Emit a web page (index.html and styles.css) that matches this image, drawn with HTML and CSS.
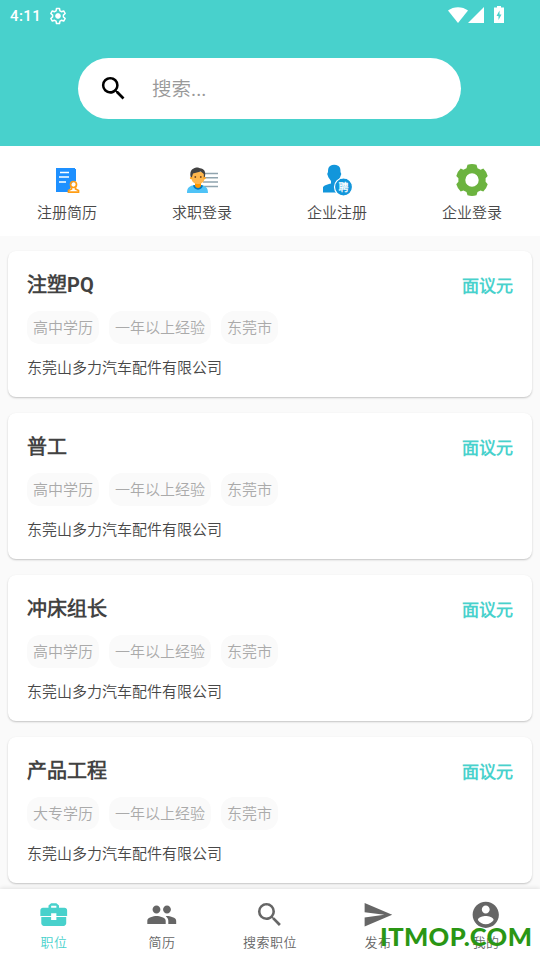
FILE: index.html
```html
<!DOCTYPE html>
<html lang="zh-CN">
<head>
<meta charset="utf-8">
<title>职位</title>
<link rel="stylesheet" href="styles.css">
</head>
<body>
<header class="top">
  <div class="status">
    <span class="time">4:11</span>
    <svg class="gear" width="18" height="18" viewBox="0 0 24 24" fill="none" stroke="#fff"><path stroke-width="2" stroke-linejoin="round" d="M10 2h4l.6 3.1 2 1.2 3-1 2 3.400-2.400 2.100v2.400l2.400 2.100-2 3.400-3-1-2 1.200L14 22h-4l-.6-3.100-2-1.200-3 1-2-3.400 2.400-2.100v-2.400L2.400 8.700l2-3.400 3 1 2-1.200z"/><circle cx="12" cy="12" r="3.300" fill="#fff"/></svg>
    <div class="signals">
      <svg width="20" height="16" viewBox="0 0 20 16"><path fill="#fff" d="M0 3.500C5.500-1 14.500-1 20 3.500L10 16z"/></svg>
      <svg width="16" height="16" viewBox="0 0 16 16"><path fill="#fff" d="M16 0v16H0z"/></svg>
      <svg class="battery" width="10" height="17" viewBox="0 0 10 17"><path fill="#fff" d="M3 0h4v1.500h3V17H0V1.500h3z"/><path fill="#48d1cc" d="M5.500 4.500 2.500 10H4.500v4l3-5.500h-2z"/></svg>
    </div>
  </div>
  <div class="search">
    <svg width="31" height="31" viewBox="0 0 24 24"><path d="M15.500 14h-.79l-.28-.27A6.470 6.470 0 0 0 16 9.500 6.500 6.500 0 1 0 9.500 16c1.610 0 3.090-.59 4.230-1.570l.27.28v.79l5 4.990L20.490 19l-4.990-5zm-6 0C7.010 14 5 11.990 5 9.500S7.010 5 9.500 5 14 7.010 14 9.500 11.990 14 9.500 14z"/></svg>
    <span>搜索...</span>
  </div>
</header>
<nav class="quick">
  <a class="quick-item">
    <svg width="32" height="32" viewBox="0 0 32 32"><path fill="#1e90ff" d="M5 4h19v1h1v12a5 5 0 0 0-5 6l-3 5H5z"/><path stroke="#fff" stroke-width="1.600" d="M9 8.500h9M8 13h10M8 18h7" fill="none"/><g fill="none" stroke="#ff9d14" stroke-width="1.700"><circle cx="22.500" cy="20.500" r="3"/><path d="M20.500 23.500v1.500l-3 1.500v1.600h10v-1.600l-3-1.500v-1.500"/></g></svg>
    <span>注册简历</span>
  </a>
  <a class="quick-item">
    <svg width="32" height="32" viewBox="0 0 32 32"><path stroke="#90a4ae" stroke-width="1.600" d="M17 9.500h15M17 13.700h15M17 18h15M17 22.500h15" fill="none"/><path fill="#4fc3f7" d="M1 29c0-6 3-7 7-8l3 2 4-2c4 1 7 2 7 8z"/><path fill="#0277bd" d="M7 21.500c1 5.500 9 5.500 10 0l-2-.5H9z"/><path fill="#ff9800" d="M9 18h6v4c-1 2.500-5 2.500-6 0z"/><path fill="#ffb74d" d="M5.500 8h13v6c0 8-13 8-13 0z"/><circle cx="5.200" cy="14" r="1.300" fill="#ffa726"/><circle cx="18.500" cy="14" r="1.300" fill="#ffa726"/><path fill="#424242" d="M4.500 12.500C3.500 6 7 3.500 12 3.500l2 .8c4 .4 6 3 5 8.200l-1.200 1V10l-3-2.500L7 9.500l-1.200 4z"/><circle cx="9.300" cy="13" r=".9" fill="#784719"/><circle cx="14.800" cy="13" r=".9" fill="#784719"/></svg>
    <span>求职登录</span>
  </a>
  <a class="quick-item">
    <svg width="32" height="32" viewBox="0 0 32 32"><path fill="#1296db" d="M9 2Q13-.3 17.500 2C19.500 3.500 19.500 6 19.500 8l.8 2-1.300 3.500-2.500 4V20l1 9-3-.5H2v-5.500c2-2.500 5.500-2.500 8-3.500v-2.500l-2.500-3.500L6.200 10 7 8c0-2 0-4.500 2-6z"/><circle cx="22.500" cy="23" r="9" fill="#1296db" stroke="#fff" stroke-width="1.200"/><text class="badge-text" x="17.500" y="26.800">聘</text></svg>
    <span>企业注册</span>
  </a>
  <a class="quick-item">
    <svg width="32" height="32" viewBox="0 0 32 32"><path fill="#6cb33f" fill-rule="evenodd" d="M11.500.8Q16-.8 20.500.8L21.500 4.200 24.600 5.700 27.300 4.600Q30.500 7.500 31.700 12L29.600 14.200v3.600l2.100 2.400Q30.500 24.500 27.300 27.500L24.600 26.400 21.500 27.900 20.500 31.200Q16 32.800 11.500 31.200L10.500 27.900 7.400 26.400 4.700 27.500Q1.500 24.500.3 20.200L2.400 17.800V14.200L.3 12Q1.500 7.500 4.700 4.600L7.400 5.700 10.500 4.200zM16 9.300a6.700 6.700 0 1 0 0 13.400 6.700 6.700 0 0 0 0-13.400z"/></svg>
    <span>企业登录</span>
  </a>
</nav>
<main class="jobs">
  <article class="card">
    <div class="head"><h2>注塑PQ</h2><b class="pay">面议元</b></div>
    <div class="tags"><span>高中学历</span><span>一年以上经验</span><span>东莞市</span></div>
    <p>东莞山多力汽车配件有限公司</p>
  </article>
  <article class="card">
    <div class="head"><h2>普工</h2><b class="pay">面议元</b></div>
    <div class="tags"><span>高中学历</span><span>一年以上经验</span><span>东莞市</span></div>
    <p>东莞山多力汽车配件有限公司</p>
  </article>
  <article class="card">
    <div class="head"><h2>冲床组长</h2><b class="pay">面议元</b></div>
    <div class="tags"><span>高中学历</span><span>一年以上经验</span><span>东莞市</span></div>
    <p>东莞山多力汽车配件有限公司</p>
  </article>
  <article class="card">
    <div class="head"><h2>产品工程</h2><b class="pay">面议元</b></div>
    <div class="tags"><span>大专学历</span><span>一年以上经验</span><span>东莞市</span></div>
    <p>东莞山多力汽车配件有限公司</p>
  </article>
</main>
<footer class="tabs">
  <a class="tab active">
    <svg viewBox="0 0 24 24"><path d="M10 16h4v-2.200h7.500v4.700c0 1.100-.9 2-2 2h-15c-1.100 0-2-.9-2-2v-4.700H10zM8 6.700V5l2-1.700h4L16 5v1.700h4.200c1.100 0 2 .9 2 2v4.200H14v-2h-4v2H1.800V8.700c0-1.100.9-2 2-2zm2 0h4V5.200h-4z"/></svg>
    <span>职位</span>
  </a>
  <a class="tab">
    <svg viewBox="0 0 24 24"><path d="M16 11c1.660 0 2.990-1.340 2.990-3S17.660 5 16 5s-3 1.340-3 3 1.340 3 3 3zm-8 0c1.660 0 2.990-1.340 2.990-3S9.660 5 8 5 5 6.340 5 8s1.340 3 3 3zm0 2c-2.330 0-7 1.170-7 3.500V19h14v-2.500c0-2.330-4.670-3.500-7-3.500zm8 0c-.29 0-.62.020-.97.050 1.160.84 1.970 1.970 1.970 3.450V19h6v-2.500c0-2.330-4.670-3.500-7-3.500z"/></svg>
    <span>简历</span>
  </a>
  <a class="tab">
    <svg viewBox="0 0 24 24"><path d="M15.500 14h-.79l-.28-.27A6.470 6.470 0 0 0 16 9.500 6.500 6.500 0 1 0 9.500 16c1.610 0 3.090-.59 4.230-1.570l.27.28v.79l5 4.990L20.490 19l-4.990-5zm-6 0C7.010 14 5 11.990 5 9.500S7.010 5 9.500 5 14 7.010 14 9.500 11.990 14 9.500 14z"/></svg>
    <span>搜索职位</span>
  </a>
  <a class="tab">
    <svg viewBox="0 0 24 24"><path d="M2.010 21 23 12 2.010 3 2 10l15 2-15 2z"/></svg>
    <span>发布</span>
  </a>
  <a class="tab">
    <svg viewBox="0 0 24 24"><path d="M12 2C6.480 2 2 6.480 2 12s4.480 10 10 10 10-4.480 10-10S17.520 2 12 2zm0 3c1.660 0 3 1.340 3 3s-1.340 3-3 3-3-1.340-3-3 1.340-3 3-3zm0 14.200c-2.500 0-4.710-1.280-6-3.220.03-1.990 4-3.080 6-3.080 1.990 0 5.970 1.090 6 3.080-1.290 1.940-3.500 3.220-6 3.220z"/></svg>
    <span>我的</span>
  </a>
</footer>
<div class="watermark">ITMOP.COM</div>
</body>
</html>
```
FILE: styles.css
```css
* { box-sizing: border-box; }
body {
  margin: 0;
  width: 540px;
  height: 960px;
  overflow: hidden;
  position: relative;
  display: flex;
  flex-direction: column;
  background: #fafafa;
  color: #484848;
  font-family: Roboto, "Noto Sans CJK SC DemiLight", "Noto Sans CJK SC", sans-serif;
  font-size: 15px;
}
svg { display: block; flex: none; }
h2, p { margin: 0; }
.top { height: 146px; flex: none; background: #48d1cc; }
.status {
  height: 32px;
  padding: 0 36px 0 10px;
  display: flex;
  align-items: center;
  color: #fff;
}
.time { font-size: 15px; font-weight: 500; letter-spacing: .4px; }
.gear { margin-left: 8px; }
.signals { margin-left: auto; display: flex; align-items: center; padding-bottom: 3px; }
.battery { margin-left: 10px; }
.search {
  width: 383px;
  height: 61px;
  margin: 26px 0 0 78px;
  padding-left: 20px;
  display: flex;
  align-items: center;
  gap: 23px;
  background: #fff;
  border-radius: 31px;
  color: #999;
  font-size: 19.500px;
}
.search span { margin-top: -2px; }
.quick {
  height: 90px;
  flex: none;
  display: grid;
  grid-template-columns: repeat(4, 135px);
  background: #fff;
  margin-bottom: 15px;
}
.quick-item {
  display: flex;
  flex-direction: column;
  align-items: center;
  padding: 18px 1px 0 0;
  gap: 6px;
  line-height: 22px;
}
.badge-text { font-size: 10px; font-weight: 700; fill: #fff; }
.jobs {
  flex: 1;
  min-height: 0;
  padding: 0 8px;
  display: flex;
  flex-direction: column;
  gap: 16px;
}
.card {
  height: 146px;
  flex: none;
  padding: 20px 19px 0;
  background: #fff;
  border-radius: 8px;
  box-shadow: 0 1px 2px rgba(0, 0, 0, .22);
}
.head { display: flex; justify-content: space-between; line-height: 29px; }
.head h2 { color: #424242; font-size: 20px; font-weight: 700; }
.pay { color: #48d1cc; font-size: 17px; padding-top: 2px; line-height: 27px; }
.tags { display: flex; gap: 10px; margin-top: 11px; color: #aaa; }
.tags span { height: 33px; line-height: 35px; padding: 0 6px; border-radius: 13px; background: #fafafa; }
.card p { margin-top: 13px; line-height: 22px; }
.tabs {
  position: relative;
  height: 71px;
  flex: none;
  display: grid;
  grid-template-columns: repeat(5, 1fr);
  background: #fff;
  box-shadow: 0 -1px 4px rgba(0, 0, 0, .1);
}
.tab {
  display: flex;
  flex-direction: column;
  align-items: center;
  padding-top: 10px;
  color: #666;
  font-size: 13px;
  letter-spacing: .5px;
  line-height: 20px;
}
.tab svg { width: 31.500px; height: 31.500px; fill: currentColor; }
.tab span { margin-top: 2px; }
.active { color: #48d1cc; }
.watermark {
  position: absolute;
  left: 380px;
  top: 919px;
  font: 900 25.500px/34px Lato, sans-serif;
  letter-spacing: .4px;
  color: #2a9614;
  white-space: nowrap;
}
```
